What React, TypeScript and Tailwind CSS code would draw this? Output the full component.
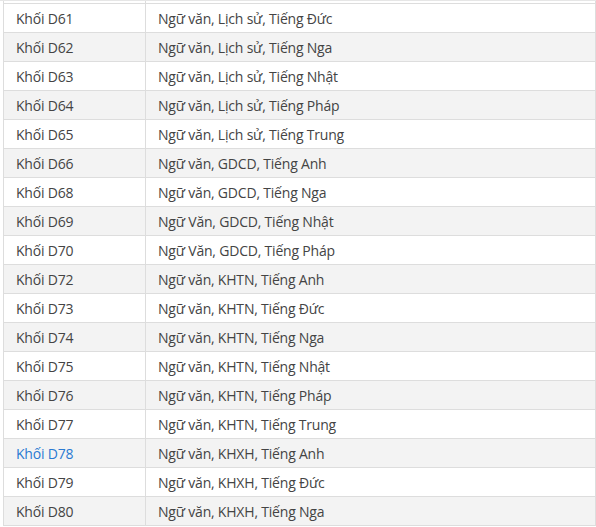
import React from "react";

const rows: [string, string][] = [
  ["Khối D61", "Ngữ văn, Lịch sử, Tiếng Đức"],
  ["Khối D62", "Ngữ văn, Lịch sử, Tiếng Nga"],
  ["Khối D63", "Ngữ văn, Lịch sử, Tiếng Nhật"],
  ["Khối D64", "Ngữ văn, Lịch sử, Tiếng Pháp"],
  ["Khối D65", "Ngữ văn, Lịch sử, Tiếng Trung"],
  ["Khối D66", "Ngữ văn, GDCD, Tiếng Anh"],
  ["Khối D68", "Ngữ văn, GDCD, Tiếng Nga"],
  ["Khối D69", "Ngữ Văn, GDCD, Tiếng Nhật"],
  ["Khối D70", "Ngữ Văn, GDCD, Tiếng Pháp"],
  ["Khối D72", "Ngữ văn, KHTN, Tiếng Anh"],
  ["Khối D73", "Ngữ văn, KHTN, Tiếng Đức"],
  ["Khối D74", "Ngữ văn, KHTN, Tiếng Nga"],
  ["Khối D75", "Ngữ văn, KHTN, Tiếng Nhật"],
  ["Khối D76", "Ngữ văn, KHTN, Tiếng Pháp"],
  ["Khối D77", "Ngữ văn, KHTN, Tiếng Trung"],
  ["Khối D78", "Ngữ văn, KHXH, Tiếng Anh"],
  ["Khối D79", "Ngữ văn, KHXH, Tiếng Đức"],
  ["Khối D80", "Ngữ văn, KHXH, Tiếng Nga"],
];

export default function App() {
  return (
    <div
      className="w-[596px] h-[527px] bg-white overflow-hidden text-[14px] text-[#444444]"
      style={{ fontFamily: '"Open Sans", "Noto Sans", sans-serif' }}
    >
      <div className="h-[1px] bg-[#e6e6e6]" />
      <div className="ml-[3px] flex h-[2px]">
        <div className="w-[142px] border-l border-[#dddddd]" />
        <div className="flex-1 border-l border-r border-[#dddddd]" />
      </div>
      <div className="ml-[3px] border-t border-[#dddddd]">
        {rows.map(([a, b], i) => (
          <div
            key={a}
            className={`flex h-[29px] border-b border-[#dddddd] ${
              i % 2 === 1 ? "bg-[#f3f3f3]" : "bg-white"
            }`}
          >
            <div
              className={`w-[142px] shrink-0 border-l border-[#dddddd] pl-[12px] flex items-center tracking-[-0.2px] ${
                a === "Khối D78" ? "text-[#2a7ad2]" : ""
              }`}
            >
              {a}
            </div>
            <div className="flex-1 border-l border-r border-[#dddddd] pl-[12px] flex items-center tracking-[-0.2px]">
              {b}
            </div>
          </div>
        ))}
      </div>
    </div>
  );
}
